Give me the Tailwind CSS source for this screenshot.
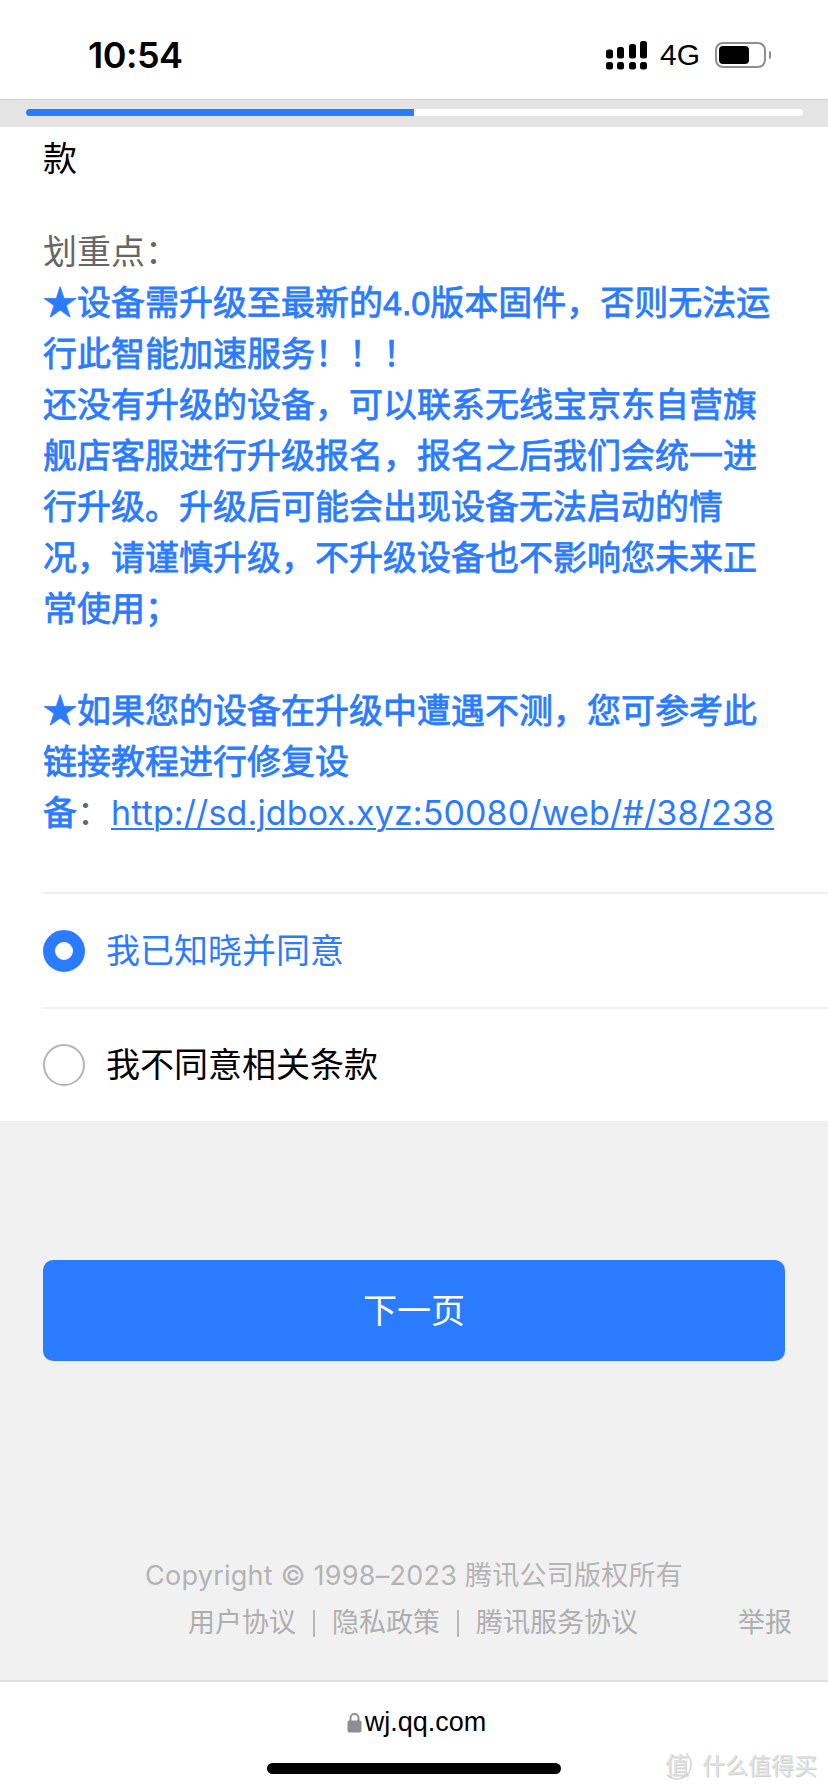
<!DOCTYPE html>
<html lang="zh-CN">
<head>
    <meta charset="UTF-8">
    <meta name="viewport" content="width=device-width, initial-scale=1.0">
    <title>wj.qq.com</title>
    <script src="https://cdn.jsdelivr.net/npm/@tailwindcss/browser@4"></script>
</head>
<body class="bg-white text-black font-['Inter','Noto_Sans_CJK_SC',sans-serif]">
<div class="relative w-[828px] h-[1791px] overflow-hidden flex flex-col">

    <!-- status bar -->
    <div class="h-[99px] shrink-0 flex items-center justify-between pl-[88px] pr-[57px] pt-[11px]">
        <span class="text-[36px] leading-none font-semibold tracking-[-0.5px]">10:54</span>
        <div class="flex items-center">
            <svg width="42" height="29" viewBox="0 0 42 29" fill="#000">
                <rect x="0" y="8.5" width="7" height="9" rx="2.5"/><rect x="11" y="6" width="7" height="11.5" rx="2.5"/><rect x="23" y="3" width="7" height="14.5" rx="2.5"/><rect x="34" y="0" width="7" height="17.5" rx="2.5"/>
                <rect x="0" y="21" width="7" height="7.5" rx="2.5"/><rect x="11" y="21" width="7" height="7.5" rx="2.5"/><rect x="23" y="21" width="7" height="7.5" rx="2.5"/><rect x="34" y="21" width="7" height="7.5" rx="2.5"/>
            </svg>
            <span class="ml-[12px] text-[30px] leading-none font-['Liberation_Sans']">4G</span>
            <div class="ml-[15px] w-[51px] h-[26px] rounded-[8px] border-2 border-[#8e8e8e] p-[2px]">
                <div class="w-[30px] h-full rounded-[4px] bg-black"></div>
            </div>
            <div class="ml-[3px] w-[2px] h-[8px] rounded-r-full bg-[#8e8e8e]"></div>
        </div>
    </div>

    <!-- progress -->
    <div class="h-[28px] shrink-0 bg-[#e4e4e4] border-t border-[#cfcfcf] pt-[9px] px-[26px]">
        <div class="h-[7px] w-[777px] rounded-full bg-white">
            <div class="h-full w-[388px] rounded-l-full bg-[#2b7bff]"></div>
        </div>
    </div>

    <!-- question -->
    <div class="h-[994px] shrink-0 bg-white pl-[43px] pt-[6px] text-[34px] leading-[51px]">
        <p>款</p>
        <p class="mt-[42px] text-[#666]">划重点：</p>
        <div class="text-[#2b7bff] [-webkit-text-stroke:0.8px_#2b7bff]">
            <p><span class="leading-none font-['Noto_Sans_CJK_SC']">★</span>设备需升级至最新的<span class="leading-none font-['Liberation_Sans']">4.0</span>版本固件，否则无法运</p>
            <p>行此智能加速服务！！！</p>
            <p>还没有升级的设备，可以联系无线宝京东自营旗</p>
            <p>舰店客服进行升级报名，报名之后我们会统一进</p>
            <p>行升级。升级后可能会出现设备无法启动的情</p>
            <p>况，请谨慎升级，不升级设备也不影响您未来正</p>
            <p>常使用；</p>
            <p class="h-[51px]"></p>
            <p><span class="leading-none font-['Noto_Sans_CJK_SC']">★</span>如果您的设备在升级中遭遇不测，您可参考此</p>
            <p>链接教程进行修复设</p>
            <p class="whitespace-nowrap">备<span class="text-[#666] [-webkit-text-stroke:0]">：</span><a href="#" class="underline decoration-2 underline-offset-[3px] tracking-[0.12px] [-webkit-text-stroke:0]">http://sd.jdbox.xyz:50080/web/#/38/238</a></p>
        </div>

        <div class="mt-[54px] border-t-2 border-[#f0f0f0] h-[115px] flex items-center">
            <span class="w-[42px] h-[42px] rounded-full border-[12px] border-[#2b7bff] bg-white"></span>
            <span class="ml-[21px] text-[#2b7bff]">我已知晓并同意</span>
        </div>
        <div class="border-t-2 border-[#f0f0f0] h-[113px] flex items-center">
            <span class="w-[42px] h-[42px] rounded-full border-2 border-[#b5b5b5] bg-white"></span>
            <span class="ml-[21px]">我不同意相关条款</span>
        </div>
    </div>

    <!-- footer area -->
    <div class="flex-1 bg-[#f1f1f1] flex flex-col">
        <div class="mt-[139px] mx-[43px] h-[101px] rounded-[10px] bg-[#2b7bff] text-white text-[34px] flex items-center justify-center">下一页</div>
        <p class="mt-[195px] text-center text-[27px] leading-[40px] tracking-[0.25px] text-[#b4b4b4]">Copyright © 1998–2023 腾讯公司版权所有</p>
        <div class="mt-[7px] pl-[188px] flex items-center text-[27px] leading-[40px] text-[#aeaeae]">
            <span>用户协议</span>
            <span class="mx-[17px] w-[2px] h-[27px] bg-[#b8b8b8]"></span>
            <span>隐私政策</span>
            <span class="mx-[17px] w-[2px] h-[27px] bg-[#b8b8b8]"></span>
            <span>腾讯服务协议</span>
            <span class="ml-[100px]">举报</span>
        </div>
    </div>

    <!-- safari bar -->
    <div class="h-[111px] shrink-0 border-t-2 border-[#dedede] bg-white flex flex-col items-center">
        <div class="mt-[25px] pl-[5px] flex items-center">
            <svg width="15" height="21" viewBox="0 0 15 21" class="mr-[3px]"><path d="M3.5 9V6a4 4 0 0 1 8 0v3" fill="none" stroke="#8e8e93" stroke-width="2"/><rect x="0.5" y="8.5" width="14" height="12" rx="2" fill="#8e8e93"/></svg>
            <span class="text-[27px] leading-[30px] font-['Liberation_Sans']">wj.qq.com</span>
        </div>
        <div class="mt-[26px] w-[294px] h-[11px] rounded-full bg-black"></div>
    </div>

    <!-- watermark -->
    <div class="absolute left-[662px] top-[1752px] flex items-center text-[#e2e2e2] [text-shadow:1px_1px_0_#cfcfcf]">
        <div class="relative w-[30px] h-[28px] text-[24px] leading-[28px] text-center">
            值
            <svg class="absolute left-0 top-0" width="30" height="28" viewBox="0 0 30 28" fill="none"><path d="M24 1.5C28 5 29.5 9 29 14c-.7 7-6.5 13-14 13-4 0-7-1-10-4" stroke="#d4d4d4" stroke-width="1.5"/></svg>
        </div>
        <span class="ml-[10px] text-[23px] leading-[28px] whitespace-nowrap">什么值得买</span>
    </div>
</div>
</body>
</html>
